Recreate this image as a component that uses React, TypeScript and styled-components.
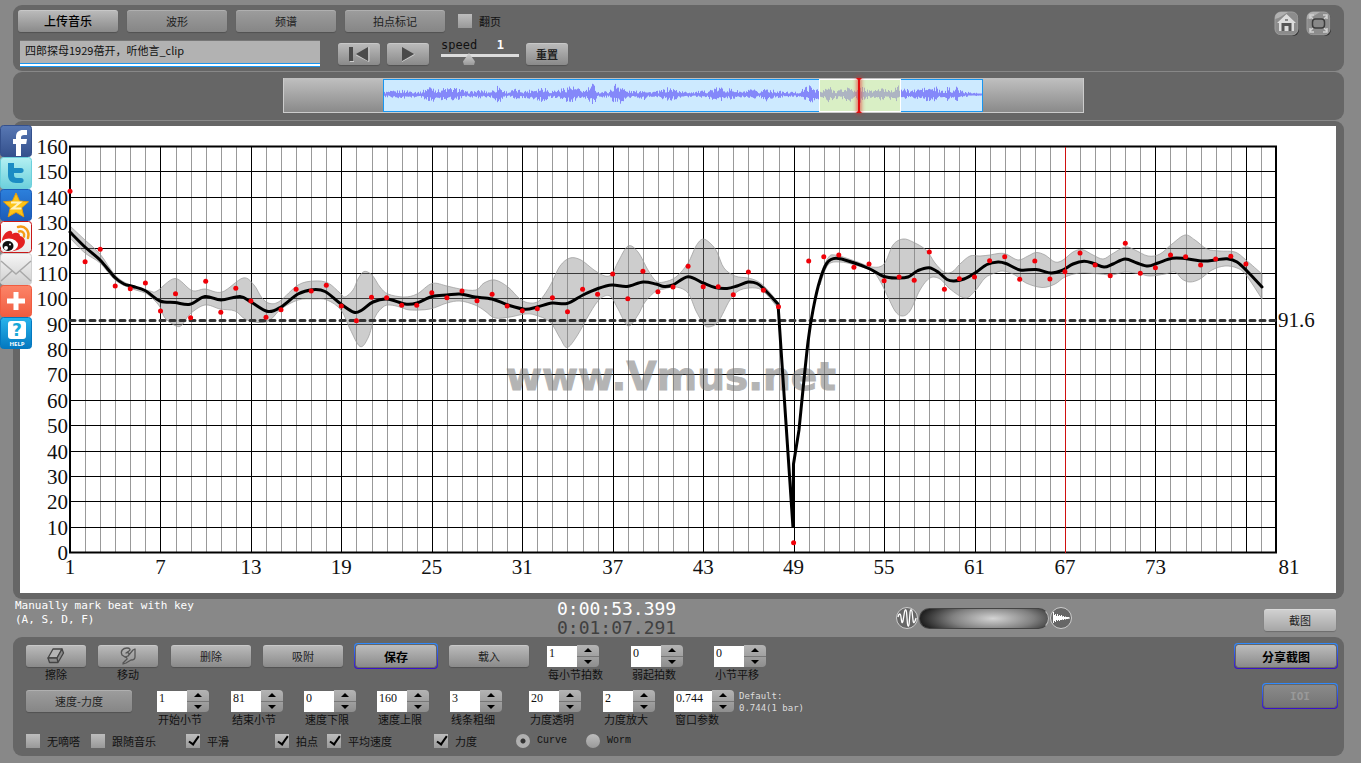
import React from 'react';
import styled, { createGlobalStyle, css } from 'styled-components';

const SANS = `"Noto Sans CJK SC", "Liberation Sans", sans-serif`;
const MONO = `"DejaVu Sans Mono", "Noto Sans CJK SC", monospace`;

const GlobalStyle = createGlobalStyle`
  * { box-sizing: border-box; }
  body { margin: 0; background: #888; font-family: ${SANS}; font-size: 11px; color: #111; }
  button, input { font-family: inherit; color: inherit; margin: 0; }
`;

const Page = styled.main`
  position: relative;
  min-height: 100vh;
  padding: 5px 17px 7px 13px;
`;

const Panel = styled.section`
  background: #666;
  border-radius: 9px;
  margin-bottom: 1px;
`;

const TopPanel = styled(Panel)`
  display: flex;
  justify-content: space-between;
  height: 66px;
  padding: 5px 12px 0 5px;
`;

const ToolRow = styled.div`
  display: flex;
  align-items: center;
  gap: 9px;
  height: 21px;
`;

const TransportRow = styled.div`
  display: flex;
  align-items: center;
  gap: 7px;
  margin-top: 9px;
  padding-left: 2px;
`;

type Tone = 'bright' | 'soft' | 'light' | 'dim';

const tones: Record<Tone, string> = {
  bright: 'linear-gradient(#bcbcbc, #8a8a8a)',
  soft: 'linear-gradient(#9d9d9d, #868686)',
  light: 'linear-gradient(#d2d2d2, #a6a6a6)',
  dim: 'linear-gradient(#8a8a8a, #747474)',
};

const Button = styled.button<{ $w: number; $tone?: Tone; $strong?: boolean }>`
  display: flex;
  align-items: center;
  justify-content: center;
  width: ${(p) => p.$w}px;
  height: 22px;
  padding: 0;
  border: 0;
  border-radius: 3px;
  background: ${(p) => tones[p.$tone ?? 'bright']};
  box-shadow: inset 0 1px 0 rgba(255, 255, 255, 0.2), 0 1px 1px rgba(0, 0, 0, 0.2);
  font-size: ${(p) => (p.$strong ? 12 : 11)}px;
  font-weight: ${(p) => (p.$strong ? 500 : 400)};
  color: ${(p) => (p.$strong ? '#000' : '#222')};
`;

const FocusRing = styled.span`
  display: inline-flex;
  padding: 1px;
  margin-top: -2px;
  border-radius: 4px;
  background: linear-gradient(#2f8cff, #3a10c8);

  button {
    height: 24px;
    border: 1px solid #666;
    box-shadow: none;
    background-clip: padding-box;
    background-color: #666;
    font-weight: 700;
  }
  button:disabled {
    color: #999;
    font-family: ${MONO};
  }
`;

const Check = styled.label`
  display: flex;
  align-items: center;
  gap: 7px;
  height: 14px;
  line-height: 14px;
  white-space: nowrap;
`;

const ToolCheck = styled(Check)`
  margin-left: 4px;
`;

const markBox = css`
  appearance: none;
  width: 14px;
  height: 14px;
  background: linear-gradient(#bdbdbd, #999);
`;

const CheckBox = styled.input.attrs({ type: 'checkbox' })`
  ${markBox}
  position: relative;

  &:checked::after {
    content: '';
    position: absolute;
    left: 5px;
    top: 0;
    width: 4px;
    height: 9px;
    border: solid #000;
    border-width: 0 2px 2px 0;
    transform: rotate(35deg);
  }
`;

const Radio = styled.input.attrs({ type: 'radio' })`
  ${markBox}
  border-radius: 50%;
  &:checked { background: radial-gradient(circle, #333 2px, #b0b0b0 3px); }
`;

const MonoText = styled.span`
  font-family: "Liberation Mono", monospace;
  font-size: 10px;
`;

const TitleInput = styled.input`
  width: 300px;
  height: 27px;
  margin-right: 11px;
  padding: 0 5px 8px;
  border: 0;
  border-top: 1px solid #777;
  border-bottom: 1px solid #1996f0;
  background: linear-gradient(#b2b2b2, #b2b2b2) top / 100% 22px no-repeat,
    linear-gradient(#1996f0 1px, #fff 1px) top 22px left / 100% 4px no-repeat;
  font-size: 11px;
`;

const SpeedBox = styled.label`
  display: block;
  width: 78px;
  height: 27px;
  margin: 0 0 0 5px;
  font-family: ${MONO};
  font-size: 12px;
  line-height: 10px;
`;

const SpeedText = styled.span`
  display: flex;
  justify-content: space-between;
  height: 12px;
  padding-right: 15px;
`;

const SpeedValue = styled.output`
  color: #fff;
  font-weight: 700;
`;

const SpeedRange = styled.input.attrs({ type: 'range' })`
  appearance: none;
  display: block;
  width: 78px;
  height: 14px;
  background: linear-gradient(#ddd, #ddd) 0 2px / 100% 3px no-repeat;

  &::-webkit-slider-thumb {
    appearance: none;
    width: 12px;
    height: 12px;
    background: linear-gradient(#d4d4d4, #999);
    clip-path: polygon(50% 0, 100% 70%, 92% 100%, 8% 100%, 0 70%);
  }
`;

const IconRow = styled.nav`
  display: flex;
  gap: 5px;
  padding-top: 1px;
`;

const IconButton = styled.button`
  width: 27px;
  height: 25px;
  padding: 0;
  border: 0;
  background: none;
`;

const OverviewPanel = styled(Panel)`
  display: flex;
  justify-content: center;
  padding: 6px 0 7px 10px;
`;

const Strip = styled.div`
  width: 801px;
  height: 35px;
  padding: 0 100px 0 99px;
  border: solid #ccc;
  border-width: 0 1px 1px;
  background: linear-gradient(#c0c0c0, #8a8a8a);
`;

const Track = styled.div`
  position: relative;
  height: 33px;
  margin-top: 1px;
  border: 1px solid #1996f0;
  background: #cdeaff;

  svg { display: block; width: 100%; height: 31px; }
`;

const Selection = styled.div`
  position: absolute;
  left: 435px;
  top: -1px;
  width: 82px;
  height: 33px;
  border: 1px solid #fff;
  background: rgba(235, 247, 110, 0.4);
`;

const Playhead = styled.div`
  position: absolute;
  left: 474px;
  top: -2px;
  width: 2px;
  height: 35px;
  background: #e01010;
  box-shadow: 0 0 4px 1px rgba(230, 40, 40, 0.8);

  &::before,
  &::after {
    content: '';
    position: absolute;
    left: -2px;
    width: 6px;
    height: 3px;
    background: #e01010;
    clip-path: polygon(0 0, 100% 0, 50% 100%);
  }
  &::after { bottom: 0; transform: rotate(180deg); }
`;

const ChartPanel = styled(Panel)`
  margin-bottom: 0;
  padding: 5px 8px 6px 7px;
`;

const ChartSvg = styled.svg`
  display: block;
  width: 100%;
  height: auto;
  background: #fff;
`;

const InfoRow = styled.div`
  display: flex;
  align-items: flex-start;
  height: 38px;
  padding: 0 8px 0 2px;
`;

const Hint = styled.p`
  flex: 0 0 542px;
  margin: 0;
  color: #fff;
  font: 11px/14px ${MONO};
`;

const Times = styled.div`
  flex: 0 0 338px;
  color: #fff;
  font: 18px/19px ${MONO};

  time { display: block; }
  time + time { color: #404040; }
`;

const Balance = styled.div`
  display: flex;
  align-items: center;
  margin-top: 7px;
`;

const BalanceRange = styled.input.attrs({ type: 'range' })`
  appearance: none;
  width: 130px;
  height: 21px;
  border-radius: 11px;
  border: 1px solid #444;
  border-right-color: #bbb;
  background: radial-gradient(ellipse 58% 110% at 57% 50%, #d4d4d4, #808080 55%, #1c1c1c);
  &::-webkit-slider-thumb { appearance: none; width: 1px; height: 1px; }
`;

const Capture = styled.div`
  margin: 10px 0 0 auto;
`;

const Controls = styled(Panel)`
  display: flex;
  justify-content: space-between;
  margin-bottom: 0;
  height: 119px;
  padding: 8px 6px 0 13px;
`;

const ControlRow = styled.div<{ $cols: string; $h: number }>`
  display: grid;
  grid-template-columns: ${(p) => p.$cols};
  align-items: start;
  height: ${(p) => p.$h}px;
`;

const Stack = styled.div`
  width: 60px;
  text-align: center;
  line-height: 14px;
  white-space: nowrap;
`;

const StepLabel = styled.label`
  display: block;
  line-height: 14px;
  white-space: nowrap;
`;

const StepCaption = styled.span`
  padding-left: 1px;
`;

const StepBox = styled.span`
  display: flex;
  height: 22px;
`;

const StepInput = styled.input<{ $w: number }>`
  width: ${(p) => p.$w}px;
  height: 21px;
  margin-top: 1px;
  padding: 0 0 7px 2px;
  border: 0;
  background: #fff;
  font-family: "Liberation Serif", serif;
  font-size: 12px;
`;

const StepArrows = styled.span`
  display: flex;
  flex-direction: column;
  width: 22px;
  overflow: hidden;
  border-radius: 0 4px 4px 0;
  background: linear-gradient(#b4b4b4, #8e8e8e);
`;

const StepArrow = styled.button<{ $down?: boolean }>`
  flex: 1;
  padding: 0;
  border: 0;
  border-top: ${(p) => (p.$down ? '1px solid #777' : '0')};
  background: none;
  display: flex;
  align-items: center;
  justify-content: center;

  &::before {
    content: '';
    border: solid transparent;
    border-width: ${(p) => (p.$down ? '4px 4px 0' : '0 4px 4px')};
    border-top-color: ${(p) => (p.$down ? '#000' : 'transparent')};
    border-bottom-color: ${(p) => (p.$down ? 'transparent' : '#000')};
  }
`;

const DefaultNote = styled.p`
  margin: 0;
  color: #ddd;
  font: 9px/12px ${MONO};
  white-space: nowrap;
`;

const Actions = styled.div`
  display: flex;
  flex-direction: column;
  align-items: flex-end;
  gap: 16px;
`;

const ShareBar = styled.nav`
  position: absolute;
  left: 0;
  top: 125px;
  display: flex;
  flex-direction: column;

  a, svg { display: block; width: 32px; height: 32px; }
`;

/* ---- chart data, in window units (the drawing's origin is at OX, OY) ---- */

const OX = 20;
const OY = 126;
const STEP = 15.075;

const beats = [
  191.3, 261.7, 249.3, 286, 288.7, 283, 311, 293.7, 317.7, 281.3, 312.3, 288.3, 301, 317.3, 309.7,
  289.3, 291, 285.3, 306, 320.7, 297.3, 297.7, 305.3, 305.3, 292.7, 297.7, 291, 300.7, 294.3, 306,
  310.7, 308.7, 297.7, 311.7, 289.3, 294.3, 274, 298.7, 271.3, 291.7, 287, 266.3, 286.7, 286.7,
  294.7, 272, 290.3, 306.7, 542.7, 261, 256.7, 255, 267.3, 264, 280.7, 277, 280.3, 252, 289.3,
  278.7, 277, 260.7, 256.7, 279.3, 261, 279, 271.7, 253, 265, 275.7, 243.3, 273.3, 267.7, 255,
  256.7, 265, 259, 256.3, 264,
];

type Pt = [number, number];

const curveA: Pt[] = [
  [70, 232], [85, 247], [100, 260], [115, 277.5], [124, 284], [133, 286.5], [145, 290.5], [160, 301],
  [175, 302.5], [190, 304.3], [205, 296.5], [221, 300], [240, 296.5], [251, 302], [268, 311.5],
  [281, 307], [298, 294], [313, 289.7], [325, 291.5], [341, 304], [354, 312.3], [362, 310], [373, 302],
  [387, 299], [405, 304], [417, 303], [432, 296.5], [447, 295], [460, 294], [475, 297], [492, 299],
  [508, 305], [525, 309.2], [537, 307], [552, 303], [567, 303.5], [583, 295], [598, 288.5],
  [612, 285], [627, 286.5], [643, 282], [656, 284], [664, 286.5], [673, 285], [688, 276.7],
  [703, 283], [715, 287.5], [727, 288.5], [737, 286], [748, 282], [757, 283.5], [765, 290], [778, 304],
];

const dip: Pt[] = [[778, 304], [793, 528], [793.5, 464], [799, 430]];

const curveB: Pt[] = [
  [799, 430], [808, 342], [814, 305], [820, 280], [827, 263], [836, 258.3], [853, 262.5],
  [870, 269], [884, 276.5], [897, 278], [908, 277], [918, 270.5], [929, 267.7], [938, 272],
  [947, 279.5], [954, 281], [964, 279], [975, 273], [987, 264.5], [998, 262], [1006, 263.5],
  [1020, 270], [1036, 269.5], [1051, 273], [1062, 270.5], [1073, 264], [1084, 261.3], [1094, 263.5],
  [1104, 267], [1113, 264], [1125, 259], [1137, 263], [1148, 266], [1158, 263], [1172, 258.3],
  [1185, 258.5], [1203, 261], [1215, 260], [1227, 258.7], [1237, 262], [1247, 271], [1262, 287],
];

const upperA: Pt[] = [
  [70, 226], [85, 240], [100, 254], [115, 275], [130, 285], [150, 291], [157, 291], [175, 278.5],
  [192, 290.5], [205, 289], [222, 292], [243, 278], [254, 285], [262, 298], [270, 303.5], [280, 301],
  [298, 285], [314, 281], [328, 283], [340, 293], [345, 297], [353, 290], [358, 279], [364, 271.5],
  [372, 275], [380, 287], [388, 294], [404, 297], [417, 294], [432, 283.5], [447, 286], [460, 289],
  [476, 290], [484, 283], [495, 280], [508, 287], [520, 299], [530, 303], [540, 300], [551, 284],
  [560, 266], [570, 258], [581, 260], [594, 270], [605, 276], [612, 274], [618, 262], [628, 246],
  [638, 252], [648, 270], [656, 281], [664, 282], [676, 277], [688, 263], [696, 246], [703, 239],
  [711, 244], [717, 252], [724, 268], [735, 276], [748, 278], [757, 281], [765, 287], [778, 302],
];

const lowerA: Pt[] = [
  [70, 238], [85, 253], [100, 263], [115, 280], [130, 288], [145, 293], [153, 299], [160, 307],
  [165, 318], [176, 326], [182, 325], [190, 314], [205, 305], [220, 309], [235, 311], [245, 319],
  [258, 322.5], [270, 320], [281, 309], [298, 300], [314, 299], [327, 300], [341, 310], [350, 329],
  [360, 346.5], [368, 338], [375, 317], [383, 307], [390, 305], [400, 307], [410, 310], [430, 309],
  [447, 303], [460, 301], [475, 305], [485, 311], [495, 318], [510, 317], [525, 314], [535, 315],
  [550, 322], [560, 338], [567, 347.5], [577, 336], [590, 313], [600, 299], [610, 296], [618, 309],
  [628, 326], [638, 315], [645, 302], [656, 291], [664, 289], [676, 287], [688, 293], [696, 311],
  [703, 323], [708, 327], [718, 322], [730, 300], [740, 290], [756, 288], [765, 293], [778, 308],
];

const upperB: Pt[] = [
  [820, 275], [828, 258], [835, 255], [855, 261], [872, 267], [884, 264], [893, 245], [903, 239],
  [913, 242], [926, 250], [935, 263], [944, 272], [952, 272], [960, 264], [970, 256], [980, 256],
  [990, 255], [998, 253.5], [1006, 254], [1018, 260], [1028, 256], [1036, 252.5], [1045, 255],
  [1055, 262], [1063, 260], [1073, 252], [1082, 249.5], [1093, 255], [1103, 259], [1112, 254],
  [1125, 247], [1135, 250], [1148, 256], [1160, 254], [1172, 244], [1185, 235], [1195, 240],
  [1207, 249], [1220, 251], [1235, 252], [1246, 260], [1262, 274],
];

const lowerB: Pt[] = [
  [820, 285], [828, 265], [840, 262], [855, 265], [872, 271], [880, 281], [887, 295], [895, 311],
  [902, 316], [910, 311], [920, 290], [930, 278], [940, 279], [950, 289], [965, 298], [975, 291],
  [985, 278], [995, 273], [1003, 271], [1015, 275], [1026, 283], [1042, 287.5], [1055, 284],
  [1065, 277], [1080, 273], [1100, 274], [1112, 275], [1125, 272], [1140, 274], [1150, 276],
  [1165, 274], [1175, 272], [1182, 279], [1190, 282], [1200, 279], [1212, 270], [1225, 266],
  [1237, 268], [1246, 275], [1262, 299],
];

const r1 = (n: number) => Math.round(n * 10) / 10;

/* Catmull-Rom spline through the points, as cubic Béziers. */
function spline(src: Pt[], start: 'M' | 'L' = 'M') {
  const p = src.map(([x, y]) => [x - OX, y - OY]);
  let d = `${start}${p[0][0]} ${p[0][1]}`;
  for (let i = 0; i < p.length - 1; i++) {
    const a = p[Math.max(i - 1, 0)];
    const b = p[i];
    const c = p[i + 1];
    const e = p[Math.min(i + 2, p.length - 1)];
    d += `C${r1(b[0] + (c[0] - a[0]) / 6)} ${r1(b[1] + (c[1] - a[1]) / 6)} ${r1(c[0] - (e[0] - b[0]) / 6)} ${r1(c[1] - (e[1] - b[1]) / 6)} ${c[0]} ${c[1]}`;
  }
  return d;
}

const band = (up: Pt[], low: Pt[]) => `${spline(up)}${spline([...low].reverse(), 'L')}Z`;
const line = (pts: Pt[]) => pts.map(([x, y]) => `L${x - OX} ${y - OY}`).join('');

function TempoChart() {
  const top = 21;
  const bottom = 427;
  const left = 50;
  const right = 1256;
  const gridX = Array.from({ length: 80 }, (_, i) => i);
  const rows = Array.from({ length: 17 }, (_, i) => i * 10);
  const yOf = (v: number) => Math.round(bottom - v * 2.5375);
  const xOf = (i: number) => Math.round(left + i * STEP);
  return (
    <ChartSvg viewBox="0 0 1316 467" role="img" aria-label="Tempo curve">
      <g shapeRendering="crispEdges">
        {gridX.map((i) => (
          <rect key={i} x={xOf(i)} y={top} width="1" height={bottom - top} fill={i % 6 ? '#999' : '#000'} />
        ))}
        {rows.map((v) => (
          <rect key={v} x={left} y={yOf(v) - 1} width={right - left} height="1" />
        ))}
      </g>
      <path d={band(upperA, lowerA)} fill="#888" fillOpacity="0.42" stroke="#999" strokeOpacity="0.7" />
      <path d={band(upperB, lowerB)} fill="#888" fillOpacity="0.42" stroke="#999" strokeOpacity="0.7" />
      <rect x={left} y={top - 0.5} width={right - left} height={bottom - top} fill="none" stroke="#000" strokeWidth="2" />
      <line x1={left} x2={right} y1="194.5" y2="194.5" stroke="#333" strokeWidth="3" strokeDasharray="5 5" strokeLinecap="round" />
      <text
        x="486"
        y="264"
        fontFamily="DejaVu Sans"
        fontWeight="700"
        fontSize="39"
        fill="#777"
        stroke="#777"
        strokeWidth="1"
        opacity="0.55"
      >
        www.Vmus.net
      </text>
      <path
        d={spline(curveA) + line(dip) + spline(curveB, 'L')}
        fill="none"
        stroke="#000"
        strokeWidth="3"
        strokeLinejoin="bevel"
        strokeLinecap="round"
      />
      <rect x="1045" y={top} width="1" height={bottom - top} fill="#d01010" />
      {beats.map((y, i) => (
        <circle key={i} cx={r1(left + i * STEP)} cy={r1(y - OY)} r="2.5" fill="#f00008" />
      ))}
      <g fontFamily="Liberation Serif, serif" fontSize="21" fill="#111">
        {rows.map((v) => (
          <text key={v} x="48" y={yOf(v) + 7} textAnchor="end">{v}</text>
        ))}
        {Array.from({ length: 13 }, (_, i) => 1 + i * 6).map((n) => (
          <text key={n} x={left + (n - 1) * STEP} y="448" textAnchor="middle">{n}</text>
        ))}
        <text x="1269" y="448" textAnchor="middle">81</text>
        <text x="1258" y="201">91.6</text>
      </g>
    </ChartSvg>
  );
}

/* Loudness envelope of the recording: [position, half height]. */
const envelope: Pt[] = [
  [0, 3], [10, 4], [20, 5], [36, 3], [43, 8], [47, 10], [53, 5], [58, 7], [75, 7], [82, 3], [98, 5],
  [104, 3], [112, 7], [114, 12], [118, 5], [124, 3], [130, 6], [140, 4], [160, 9], [165, 4], [176, 6],
  [186, 10], [190, 8], [200, 4], [209, 12], [214, 3], [225, 4], [231, 12], [237, 10], [242, 4], [254, 4],
  [260, 7], [263, 3], [275, 4], [285, 8], [290, 6], [300, 3], [320, 4], [335, 8], [348, 6], [358, 3],
  [369, 6], [374, 2], [381, 8], [388, 5], [400, 3], [415, 3], [423, 10], [431, 8], [437, 3], [444, 9],
  [450, 5], [460, 6], [467, 11], [471, 3], [476, 10], [480, 8], [486, 4], [494, 7], [505, 6], [514, 9],
  [519, 6], [530, 5], [535, 7], [552, 8], [556, 4], [562, 4], [564, 11], [568, 5], [572, 8], [580, 3],
  [590, 2], [598, 1],
];

/* Fixed-seed noise, so the wave form is the same on every render. */
function noise(seed: number) {
  const v = Math.sin(seed * 127.1 + 311.7) * 43758.5453;
  return v - Math.floor(v);
}

function wavePath() {
  let d = '';
  let k = 0;
  for (let x = 0; x < 598; x++) {
    while (envelope[k + 1][0] < x) k++;
    const [x0, a] = envelope[k];
    const [x1, b] = envelope[k + 1];
    const h = a + ((b - a) * (x - x0)) / (x1 - x0);
    const up = Math.max(1, h * (0.25 + 0.75 * noise(x)));
    const down = Math.max(1, h * (0.25 + 0.65 * noise(x + 1000)));
    d += `M${x}.5 ${r1(14.5 - up)}V${r1(14.5 + down)}`;
  }
  return d;
}

function Stepper({ label, value, w = 30 }: { label: string; value: string; w?: number }) {
  return (
    <StepLabel>
      <StepBox>
        <StepInput $w={w} defaultValue={value} />
        <StepArrows>
          <StepArrow type="button" aria-label="+" />
          <StepArrow type="button" aria-label="-" $down />
        </StepArrows>
      </StepBox>
      <StepCaption>{label}</StepCaption>
    </StepLabel>
  );
}

function Tick({ label, checked = false }: { label: string; checked?: boolean }) {
  return (
    <Check>
      <CheckBox defaultChecked={checked} />
      {label}
    </Check>
  );
}

function ShareTile({ label, bg, children }: { label: string; bg: [string, string]; children: React.ReactNode }) {
  const id = `tile-${label}`;
  return (
    <a href={`#${label}`} aria-label={label}>
      <svg viewBox="0 0 32 32">
        <linearGradient id={id} x2="0" y2="1">
          <stop stopColor={bg[0]} />
          <stop offset="1" stopColor={bg[1]} />
        </linearGradient>
        <rect x="0.5" y="0.5" width="31" height="31" rx="3" fill={`url(#${id})`} stroke={bg[1]} />
        {children}
      </svg>
    </a>
  );
}

function ShareLinks() {
  return (
    <ShareBar>
      <ShareTile label="facebook" bg={['#5878b4', '#34508c']}>
        <path d="M16 31V19h-3v-5h3v-2c0-5 3-7 7-7h4v5h-3c-2 0-3 1-3 2.500V14h6l-.8 5H21v12z" fill="#fff" />
      </ShareTile>
      <ShareTile label="twitter" bg={['#b4f0f2', '#6cd0dc']}>
        <path d="M8 6h6v5h7c3.500 0 3.500 5 0 5h-7v2c0 2 1 3 3 3h4c3.500 0 3.500 5 0 5h-5c-5 0-8-3-8-8z" fill="#1c8cc4" />
      </ShareTile>
      <ShareTile label="qzone" bg={['#2c80dc', '#1c5cb8']}>
        <path d="M16 4l3.600 8 8.900.8-6.800 6 2.100 9L16 23.300 8.200 27.800l2.100-9-6.800-6 8.900-.8z" fill="#fcc418" stroke="#e49c10" />
        <path d="M11 13.500h9l-7.500 6h9" fill="none" stroke="#fff3c0" strokeWidth="2" />
      </ShareTile>
      <ShareTile label="weibo" bg={['#ffffff', '#e8e8e8']}>
        <rect x="0.500" y="0.500" width="31" height="31" rx="3" fill="none" stroke="#c81818" />
        <path d="M2 19c1-6 6-10 9-9 2 1 1 3 1 3 3-2 8-2 8 2 5 1 6 6 4 9-3 5-11 7-16 6-5-2-7-6-6-11z" fill="#e42020" />
        <ellipse cx="9" cy="24" rx="9" ry="6.500" fill="#fff" />
        <ellipse cx="8" cy="25" rx="5.500" ry="5" fill="#111" />
        <circle cx="6" cy="27" r="2" fill="#fff" />
        <circle cx="10" cy="23.500" r="1" fill="#fff" />
        <path d="M18 6c7-2 12 4 10 11M19 10.500c3.500-1 6 2 5 5" fill="none" stroke="#f49c18" strokeWidth="2.500" strokeLinecap="round" />
      </ShareTile>
      <ShareTile label="mail" bg={['#f6f6f6', '#cfcfcf']}>
        <path d="M1 8l15 13L31 8M1 28l11-10M31 28L20 18" fill="none" stroke="#a8a8a8" strokeWidth="1.500" />
      </ShareTile>
      <ShareTile label="more" bg={['#fc8468', '#f05c40']}>
        <path d="M16 7v18M7 16h18" stroke="#fff" strokeWidth="5" />
      </ShareTile>
      <ShareTile label="help" bg={['#28b4ec', '#0478c0']}>
        <rect x="8" y="4" width="18" height="18" rx="3" fill="#fff" />
        <text x="17" y="19" textAnchor="middle" fontFamily="DejaVu Sans" fontWeight="700" fontSize="17" fill="#18a8d8">?</text>
        <text x="17" y="29" textAnchor="middle" fontFamily="Open Sans" fontWeight="700" fontSize="6" fill="#fff">HELP</text>
      </ShareTile>
    </ShareBar>
  );
}

function Badge({ children }: { children: React.ReactNode }) {
  return (
    <svg width="27" height="25" viewBox="0 0 27 25">
      <rect x="3" y="2" width="23" height="23" rx="6" fill="#333" />
      <rect x="2" y="1" width="23" height="23" rx="6" fill="#8c8c8c" stroke="#9e9e9e" />
      <path d="M2 8c0-5 2-7 7-7h6C10 4 7 7 2 8z" fill="#b0b0b0" />
      {children}
    </svg>
  );
}

export default function App() {
  return (
    <Page>
      <GlobalStyle />
      <TopPanel as="header">
        <div>
          <ToolRow>
            <Button $w={100} $strong>上传音乐</Button>
            <Button $w={100} $tone="soft">波形</Button>
            <Button $w={100} $tone="soft">频谱</Button>
            <Button $w={100} $tone="soft">拍点标记</Button>
            <ToolCheck>
              <CheckBox />
              翻页
            </ToolCheck>
          </ToolRow>
          <TransportRow>
            <TitleInput aria-label="Title" defaultValue="四郎探母1929蓓开，听他言_clip" />
            <Button $w={42} aria-label="Back to start">
              <svg width="22" height="16" viewBox="0 0 22 16">
                <path d="M2 15.500h4M8 9l13 6.500V1" fill="none" stroke="#ccc" />
                <path d="M1 1h4v14H1zM20 1v14L8 8z" fill="#4a4a4a" />
              </svg>
            </Button>
            <Button $w={42} aria-label="Play">
              <svg width="16" height="16" viewBox="0 0 16 16">
                <path d="M2 15.500L14.500 8.500" stroke="#ccc" />
                <path d="M2 1v14l12-7z" fill="#4a4a4a" />
              </svg>
            </Button>
            <SpeedBox>
              <SpeedText>
                speed
                <SpeedValue>1</SpeedValue>
              </SpeedText>
              <SpeedRange min={0} max={3} step={0.1} defaultValue={1} />
            </SpeedBox>
            <Button $w={42}>
              <b>重置</b>
            </Button>
          </TransportRow>
        </div>
        <IconRow>
          <IconButton aria-label="Home">
            <Badge>
              <path d="M4 12l9.500-9 9.500 9h-2v8H6v-8z" fill="#dcdcdc" />
              <path d="M8.500 12h10v8h-3v-5h-4v5h-3z" fill="#555" />
              <rect x="12" y="8" width="3" height="2" fill="#888" />
            </Badge>
          </IconButton>
          <IconButton aria-label="Full screen">
            <Badge>
              <path d="M5 5l3 3M22 5l-3 3M5 20l3-3M22 20l-3-3M5 8V4h4M22 8V4h-4M5 17v4h4M22 17v4h-4" fill="none" stroke="#d0d0d0" strokeWidth="1.500" />
              <rect x="7.500" y="8" width="12" height="9" rx="3" fill="#888" stroke="#3c3c3c" strokeWidth="1.500" />
            </Badge>
          </IconButton>
        </IconRow>
      </TopPanel>

      <OverviewPanel>
        <Strip>
          <Track>
            <svg viewBox="0 0 598 31" preserveAspectRatio="none">
              <path d={wavePath()} stroke="#8488fa" fill="none" />
            </svg>
            <Selection />
            <Playhead />
          </Track>
        </Strip>
      </OverviewPanel>

      <ChartPanel>
        <TempoChart />
      </ChartPanel>

      <InfoRow>
        <Hint>
          Manually mark beat with key
          <br />
          (A, S, D, F)
        </Hint>
        <Times>
          <time>0:00:53.399</time>
          <time>0:01:07.291</time>
        </Times>
        <Balance>
          <svg width="24" height="24" viewBox="0 0 24 24">
            <circle cx="12" cy="12" r="10.500" fill="#666" stroke="#ccc" />
            <path d="M3 11c1-4 2.500-4 3 0s1 8 2 4l1.500-9c.6-3 1.600-3 2 0l1 12c.3 3 1.300 3 1.600 0l1-12c.4-3 1.400-3 2 0l1 9c.8 4 2 0 3-3" fill="none" stroke="#fff" strokeWidth="1.300" />
          </svg>
          <BalanceRange aria-label="Balance" />
          <svg width="24" height="24" viewBox="0 0 24 24">
            <circle cx="12" cy="12" r="10.500" fill="#666" stroke="#ccc" />
            <path
              d="M4.500 6v11M5.500 9v6M6.500 8v8M7.500 10v4M8.500 8v7M9.500 10v4M10.500 9v6M11.500 10v4M12.500 9v5M13.500 10.500v3M14.500 10v4M15.500 11v2M16.500 10.500v3M17.500 11v2M18.500 11v2M19.500 11v1.500M4 12h17"
              stroke="#fff"
            />
          </svg>
        </Balance>
        <Capture>
          <Button $w={72} $tone="light">截图</Button>
        </Capture>
      </InfoRow>

      <Controls>
        <div>
          <ControlRow $h={45} $cols="72px 73px 92px 91px 95px 98px 84px 83px auto">
            <Stack>
              <Button $w={60} aria-label="擦除">
                <svg width="18" height="16" viewBox="0 0 18 16">
                  <path d="M6 1h9l-5 9H1z" fill="#b4b4b4" stroke="#444" strokeWidth="1.300" strokeLinejoin="round" />
                  <path d="M15 1l1.500 4-5.500 9.500L10 10zM1 10h9l1 4.500H2.500z" fill="#8c8c8c" stroke="#444" strokeWidth="1.300" strokeLinejoin="round" />
                </svg>
              </Button>
              擦除
            </Stack>
            <Stack>
              <Button $w={60} aria-label="移动">
                <svg width="18" height="18" viewBox="0 0 18 18">
                  <path d="M3 8c-2-4 1-7 5-7 3 0 4 2 2 3L7 6M7 6c3-1 4 1 2 3l-3 1c2 0 3 2 1 3l-3 3M9 9l5-6 2-1v8c0 2-2 3-4 3l-5 3-3 1M6 10L3 8" fill="none" stroke="#555" strokeWidth="1.300" strokeLinecap="round" strokeLinejoin="round" />
                </svg>
              </Button>
              移动
            </Stack>
            <Button $w={80}>删除</Button>
            <Button $w={80}>吸附</Button>
            <div>
              <FocusRing>
                <Button $w={82} $strong>保存</Button>
              </FocusRing>
            </div>
            <Button $w={80}>载入</Button>
            <Stepper label="每小节拍数" value="1" />
            <Stepper label="弱起拍数" value="0" />
            <Stepper label="小节平移" value="0" />
          </ControlRow>
          <ControlRow $h={44} $cols="131px 74px 73px 73px 73px 79px 74px 71px 65px auto">
            <Button $w={106} $tone="soft">速度-力度</Button>
            <Stepper label="开始小节" value="1" />
            <Stepper label="结束小节" value="81" />
            <Stepper label="速度下限" value="0" />
            <Stepper label="速度上限" value="160" />
            <Stepper label="线条粗细" value="3" />
            <Stepper label="力度透明" value="20" />
            <Stepper label="力度放大" value="2" />
            <Stepper label="窗口参数" value="0.744" w={38} />
            <DefaultNote>
              Default:
              <br />
              0.744(1 bar)
            </DefaultNote>
          </ControlRow>
          <ControlRow $h={14} $cols="65px 95px 89px 52px 107px 82px 70px auto">
            <Tick label="无嘀嗒" />
            <Tick label="跟随音乐" />
            <Tick label="平滑" checked />
            <Tick label="拍点" checked />
            <Tick label="平均速度" checked />
            <Tick label="力度" checked />
            <Check>
              <Radio name="style" defaultChecked />
              <MonoText>Curve</MonoText>
            </Check>
            <Check>
              <Radio name="style" />
              <MonoText>Worm</MonoText>
            </Check>
          </ControlRow>
        </div>
        <Actions>
          <FocusRing>
            <Button $w={102} $strong>分享截图</Button>
          </FocusRing>
          <FocusRing>
            <Button $w={74} $tone="dim" disabled>IOI</Button>
          </FocusRing>
        </Actions>
      </Controls>

      <ShareLinks />
    </Page>
  );
}
